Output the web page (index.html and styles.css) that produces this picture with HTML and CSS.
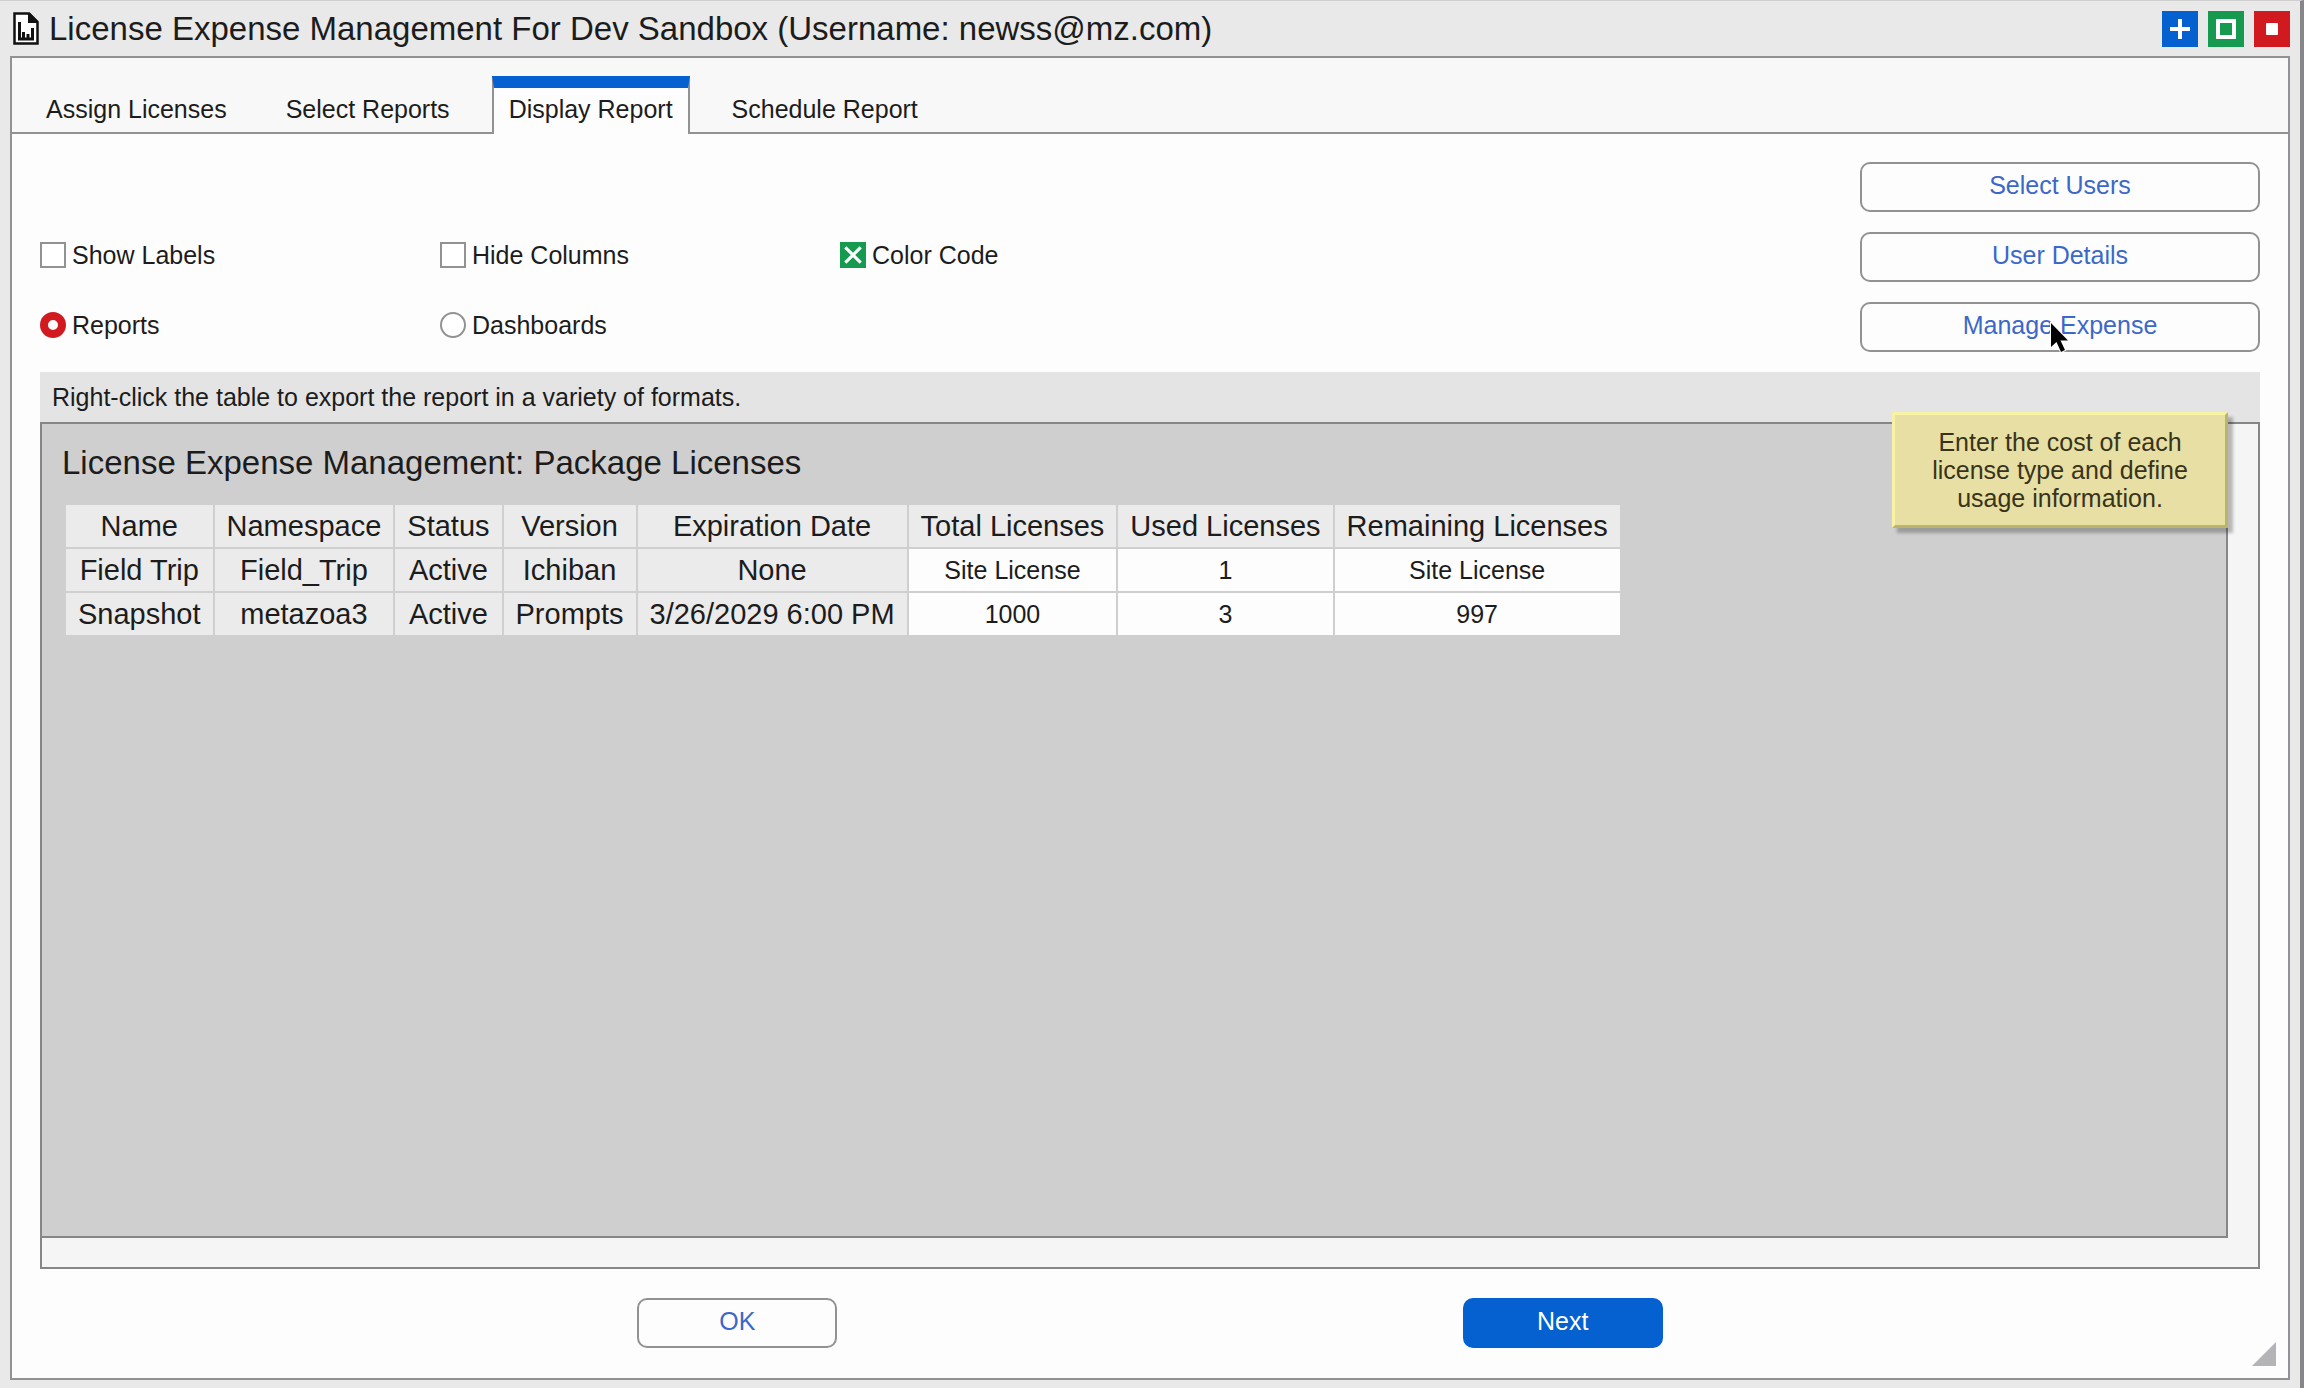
FILE: index.html
```html
<!doctype html>
<html lang="en">

<head>
	<meta charset="UTF-8" />
	<meta name="viewport" content="width=device-width, initial-scale=1.0" />
	<title>License Expense Management</title>
	<link rel="stylesheet" href="styles.css">
</head>

<body>
	<header class="titlebar">
		<svg class="doc-icon" viewBox="0 0 26 34" aria-hidden="true">
			<path d="M1.5 1.5H16L24.500 10V31.500H1.500Z" fill="#fff" stroke="#111" stroke-width="2.500" />
			<path d="M15 1H17L25 9V11H15Z" fill="#111" />
			<path d="M6.500 10V27H19.500V16M10.500 27V20M15 27V22" fill="none" stroke="#111" stroke-width="3" />
		</svg>
		<h1>License Expense Management For Dev Sandbox (Username: newss@mz.com)</h1>
		<div class="window-buttons">
			<button type="button" class="win-btn blue" aria-label="New">
				<svg viewBox="0 0 36 36"><path d="M18 8V28M8 18H28" stroke="#fff" stroke-width="4" /></svg>
			</button>
			<button type="button" class="win-btn green" aria-label="Maximize">
				<svg viewBox="0 0 36 36"><rect x="10" y="10" width="16" height="16" fill="none" stroke="#fff" stroke-width="4" /></svg>
			</button>
			<button type="button" class="win-btn red" aria-label="Close">
				<svg viewBox="0 0 36 36"><rect x="12" y="12" width="12" height="12" rx="1" fill="#fff" /></svg>
			</button>
		</div>
	</header>

	<main class="window">
		<nav class="tabs">
			<a href="#assign">Assign Licenses</a>
			<a href="#select">Select Reports</a>
			<a href="#display" class="active">Display Report</a>
			<a href="#schedule">Schedule Report</a>
		</nav>

		<div class="content">
			<form class="options">
				<button type="button" class="btn select-users">Select Users</button>

				<label><input type="checkbox" name="labels" />Show Labels</label>
				<label><input type="checkbox" name="columns" />Hide Columns</label>
				<label><input type="checkbox" name="color" checked />Color Code</label>
				<button type="button" class="btn side">User Details</button>

				<label><input type="radio" name="view" value="reports" checked />Reports</label>
				<label><input type="radio" name="view" value="dashboards" />Dashboards</label>
				<div class="side has-tip">
					<button type="button" class="btn" aria-describedby="expenseTip">Manage Expense</button>
					<svg class="cursor" viewBox="0 0 22 34" aria-hidden="true">
						<path d="M2 1V25L7.500 20L12 30L16 28L11.500 18.500H19Z" fill="#000" stroke="#fff" stroke-width="2" paint-order="stroke" />
					</svg>
					<div class="tooltip" id="expenseTip" role="tooltip">Enter the cost of each<br>license type and define<br>usage information.</div>
				</div>
			</form>

			<p class="hint">Right-click the table to export the report in a variety of formats.</p>

			<div class="report-frame">
				<section class="report">
					<h2>License Expense Management: Package Licenses</h2>
					<table>
						<thead>
							<tr>
								<th>Name</th>
								<th>Namespace</th>
								<th>Status</th>
								<th>Version</th>
								<th>Expiration Date</th>
								<th>Total Licenses</th>
								<th>Used Licenses</th>
								<th>Remaining Licenses</th>
							</tr>
						</thead>
						<tbody>
							<tr>
								<td>Field Trip</td>
								<td>Field_Trip</td>
								<td>Active</td>
								<td>Ichiban</td>
								<td>None</td>
								<td class="num">Site License</td>
								<td class="num">1</td>
								<td class="num">Site License</td>
							</tr>
							<tr>
								<td>Snapshot</td>
								<td>metazoa3</td>
								<td>Active</td>
								<td>Prompts</td>
								<td>3/26/2029 6:00 PM</td>
								<td class="num">1000</td>
								<td class="num">3</td>
								<td class="num">997</td>
							</tr>
						</tbody>
					</table>
				</section>
			</div>
		</div>

		<footer class="actions">
			<button type="button" class="btn">OK</button>
			<button type="button" class="btn primary">Next</button>
			<svg class="grip" viewBox="0 0 24 24" aria-hidden="true"><path d="M24 0V24H0Z" fill="#b4b4b6" /></svg>
		</footer>
	</main>
</body>

</html>
```

FILE: styles.css
```css
* {
	box-sizing: border-box;
}

body {
	margin: 0;
	min-height: 100vh;
	display: flex;
	flex-direction: column;
	padding: 0 10px 8px;
	border-top: 1px solid #cfcfcf;
	border-right: 4px solid #85858a;
	background-color: #e9e9e9;
	color: #1c1c1c;
	font-family: "Liberation Sans", Arial, sans-serif;
	font-size: 25px;
}

button {
	font: inherit;
	cursor: pointer;
}

.titlebar {
	display: flex;
	align-items: center;
	height: 55px;
	padding-left: 3px;
}

.doc-icon {
	width: 26px;
	height: 34px;
	margin-right: 10px;
}

h1,
h2 {
	margin: 0;
	font-size: 33px;
	font-weight: normal;
	line-height: 40px;
}

.window-buttons {
	display: flex;
	gap: 10px;
	margin-left: auto;
}

.win-btn {
	width: 36px;
	height: 36px;
	padding: 0;
	border: none;
}

.win-btn svg {
	display: block;
}

.blue {
	background-color: #0560d0;
}

.green {
	background-color: #169a50;
}

.red {
	background-color: #d01a20;
}

.window {
	flex: 1;
	display: flex;
	flex-direction: column;
	border: 2px solid #929292;
	background-color: #fdfdfd;
}

/* tabs */
.tabs {
	display: flex;
	align-items: flex-end;
	gap: 25px;
	height: 76px;
	padding-left: 17px;
	border-bottom: 2px solid #929292;
	background-color: #f8f8f8;
}

.tabs a {
	height: 58px;
	margin-bottom: -2px;
	padding: 11px 15px 0;
	border: 2px solid transparent;
	border-top-width: 12px;
	border-bottom: none;
	color: inherit;
	line-height: 20px;
	text-decoration: none;
}

.tabs .active {
	border-color: #0560d0 #929292;
	background-color: #fdfdfd;
}

.content {
	flex: 1;
	display: flex;
	flex-direction: column;
	padding: 28px 28px 0;
}

/* options and side buttons */
.options {
	display: grid;
	grid-template-columns: 400px 400px 400px 1fr 400px;
	grid-auto-rows: 50px;
	row-gap: 20px;
}

.options label {
	display: flex;
	align-items: center;
	gap: 6px;
	padding-bottom: 4px;
}

.select-users,
.side {
	grid-column: 5;
}

input {
	appearance: none;
	width: 26px;
	height: 26px;
	margin: 0;
	border: 2px solid #929292;
	background-color: #fff;
}

input[type="checkbox"]:checked {
	border-color: #169a50;
	background-color: #169a50;
}

input[type="checkbox"]:checked::before {
	content: "";
	display: block;
	width: 22px;
	height: 22px;
	background-color: #fff;
	clip-path: polygon(10% 20%, 20% 10%, 50% 40%, 80% 10%, 90% 20%, 60% 50%, 90% 80%, 80% 90%, 50% 60%, 20% 90%, 10% 80%, 40% 50%);
}

input[type="radio"] {
	border-radius: 50%;
}

input[type="radio"]:checked {
	border: 8px solid #d01a20;
}

.btn {
	width: 200px;
	height: 50px;
	padding: 0 0 4px;
	border: 2px solid #929292;
	border-radius: 10px;
	background-color: #fdfdfd;
	color: #3c68c8;
}

.options .btn {
	width: 100%;
}

.primary {
	border-color: #0560d0;
	background-color: #0560d0;
	color: #fff;
}

.has-tip {
	position: relative;
}

.cursor {
	position: absolute;
	top: 20px;
	left: 189px;
	width: 22px;
	height: 34px;
}

.tooltip {
	position: absolute;
	top: 110px;
	left: 32px;
	width: 336px;
	padding: 13px 0;
	border: 3px solid;
	border-color: #f8f2a4 #bcb468 #bcb468 #f8f2a4;
	background-color: #e8dfa4;
	box-shadow: 5px 5px 3px rgba(0, 0, 0, 0.25);
	color: #38341c;
	line-height: 28px;
	text-align: center;
}

/* report */
.hint {
	margin: 20px 0 0;
	padding: 0 12px;
	background-color: #e4e4e4;
	line-height: 50px;
}

.report-frame {
	flex: 1;
	display: flex;
	padding: 0 30px 29px 0;
	border: 2px solid #868686;
	background-color: #f5f5f5;
}

.report {
	flex: 1;
	padding: 19px 20px 0;
	border: 2px solid #868686;
	border-top: none;
	border-left: none;
	background-color: #cfcfcf;
}

table {
	margin: 20px 0 0 2px;
	border-collapse: separate;
	border-spacing: 2px;
	line-height: 42px;
	text-align: center;
	white-space: nowrap;
}

th,
td {
	padding: 0 12px;
	background-color: #ebebeb;
	font-size: 29px;
	font-weight: normal;
}

.num {
	background-color: #fdfdfd;
	font-size: 25px;
}

.actions {
	position: relative;
	display: flex;
	justify-content: space-evenly;
	padding: 29px 0 30px;
}

.grip {
	position: absolute;
	right: 12px;
	bottom: 12px;
	width: 24px;
	height: 24px;
}
```
